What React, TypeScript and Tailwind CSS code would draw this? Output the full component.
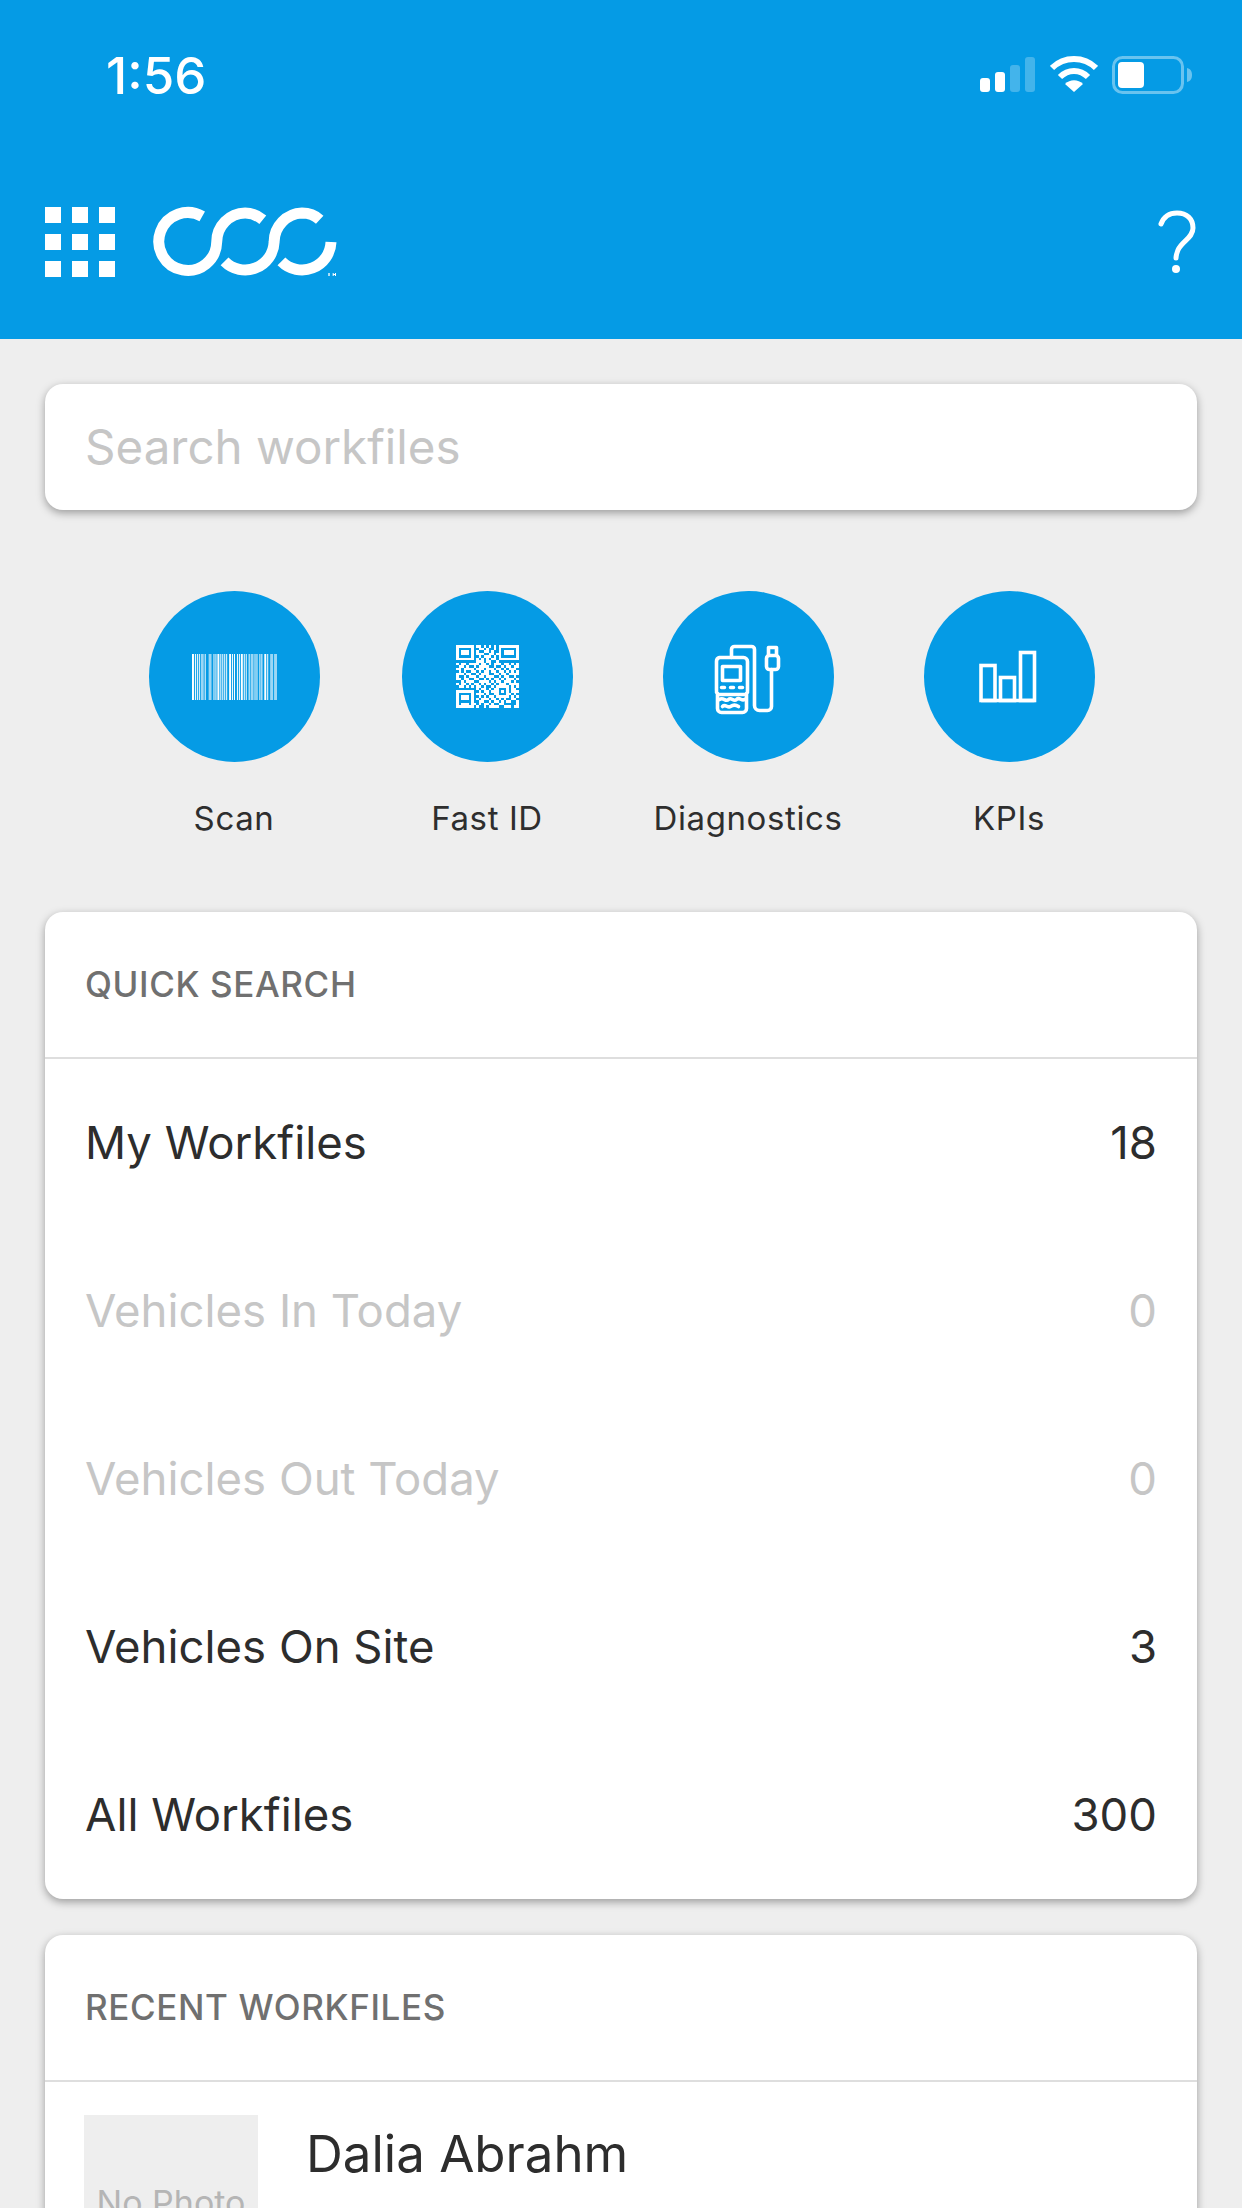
import React from 'react';

const barcode: [number, number][] = [
  [0, 2], [3, 1], [5, 1], [7, 1], [9, 3], [13, 1], [17, 3], [22, 1], [24, 1], [26, 2], [29, 1], [31, 1], [33, 1], [35, 1], [38, 2],
  [41, 1], [43, 1], [46, 1], [48, 1], [50, 2], [53, 1], [55, 1], [58, 1], [60, 3], [64, 1], [66, 1], [69, 1], [71, 1], [74, 2], [77, 1], [80, 3], [84, 3],
];

const qrRows = [
  '1111111011010101011111111',
  '1000001001101001010000001',
  '1011101010011010010111101',
  '1011101011100110110111101',
  '1000001001011101010000001',
  '1111111010101011011111111',
  '0000000011101100100000000',
  '1011011110110101110110101',
  '0110100101111001001011011',
  '1101111011101110110101110',
  '0101001101011011011010101',
  '1110110010111001101101111',
  '1001011101101110010110010',
  '1101100110010101101011101',
  '0010111001111010110111010',
  '1011010110101101011101111',
  '0110101011010010111110101',
  '0000000010110101100010110',
  '1111111001011011101010111',
  '1000001011101001100011010',
  '1011101001010110111110101',
  '1011101010111011010100110',
  '1000001001100101101011001',
  '1011101101011010011000001',
  '1111111010010111100111011',
];

const BarcodeIcon = () => (
  <svg width="85" height="46" viewBox="0 0 87 46" preserveAspectRatio="none">
    {barcode.map(([x, w], i) => (
      <rect key={i} x={x} y="0" width={w} height="46" fill="#fff" fillOpacity={w === 3 ? 0.6 : 1} />
    ))}
  </svg>
);

const QrIcon = () => (
  <svg width="63" height="63" viewBox="0 0 25 25" shapeRendering="crispEdges">
    {qrRows.map((row, y) =>
      row.split('').map((c, x) => (c === '1' ? <rect key={`${x}-${y}`} x={x} y={y} width="1" height="1" fill="#fff" /> : null))
    )}
  </svg>
);

const DiagnosticsIcon = () => (
  <svg width="100" height="100" viewBox="2.5 -1.5 100 100" fill="none" stroke="#fff" strokeWidth="3.6" strokeLinejoin="round" strokeLinecap="round">
    <path d="M36 29V21a3 3 0 0 1 3-3H56a3 3 0 0 1 3 3V77a5 5 0 0 0 5 5H72a4 4 0 0 0 4-4V41" />
    <path d="M24 29H48a4 4 0 0 1 4 4V62a3 3 0 0 1-1 3V80a4 4 0 0 1-4 4H26a4 4 0 0 1-4-4V65a3 3 0 0 1-1-3V33a4 4 0 0 1 3-4Z" />
    <rect x="27" y="38" width="18" height="14" />
    <path d="M24 66H49M24 71c4-3 6 3 9 0s5 3 8 0 5 2 8 0M27 78c3-3 5 2 8 0s5-2 8 0" />
    <path d="M26 59h3M35 59h3M44 59h3" strokeWidth="3.5" />
    <rect x="71" y="27" width="12" height="14" rx="3" />
    <path d="M73 27V19H81V27" />
  </svg>
);

const KpiIcon = () => (
  <svg width="60" height="54" viewBox="0 0 60 54" fill="none" stroke="#fff" strokeWidth="3.6">
    <rect x="2" y="15.5" width="14" height="35" />
    <rect x="21.5" y="27.5" width="14" height="23" />
    <rect x="41.5" y="2.5" width="14" height="48" />
    <path d="M2 50.5H55.5" />
  </svg>
);

const Action = ({ label, children, wide, className = '' }: { label: string; children: React.ReactNode; wide?: boolean; className?: string }) => (
  <div className={`flex flex-col items-center ${wide ? 'w-[185px]' : 'w-[171px]'} ${className}`}>
    <div className="w-[171px] h-[171px] rounded-full bg-[#059be5] flex items-center justify-center">{children}</div>
    <span className="mt-[38px] text-[33px] leading-[36px] tracking-[0.6px] text-[#2e2e2e] font-['Inter',sans-serif] whitespace-nowrap">{label}</span>
  </div>
);

const Row = ({ label, value, off }: { label: string; value: string; off?: boolean }) => (
  <div className={`h-[168px] flex items-center justify-between pl-[40px] pr-[40px] text-[45.5px] font-['Inter',sans-serif] ${off ? 'text-[#c6c6c6]' : 'text-[#2d2d2d]'}`}>
    <span>{label}</span>
    <span>{value}</span>
  </div>
);

const CardHead = ({ title }: { title: string }) => (
  <div className="h-[147px] flex items-center pl-[40px] border-b-2 border-[#dedede] text-[35px] font-medium tracking-[0.6px] text-[#707070] font-['Inter',sans-serif]">
    {title}
  </div>
);

export default function App() {
  return (
    <div className="w-[1242px] h-[2208px] overflow-hidden bg-[#eeeeee]">
      <header className="h-[339px] bg-[#059be5] text-white">
        <div className="flex justify-between items-start pt-[51px] pl-[106px] pr-[50px] h-[200px]">
          <span className="text-[51px] leading-[50px] font-medium font-['Inter',sans-serif]">1:56</span>
          <div className="flex items-start gap-[14px] pt-[5px]">
            <svg width="56" height="36" viewBox="0 0 56 36" fill="#fff">
              <rect x="0" y="22" width="10" height="14" rx="3" />
              <rect x="15" y="16" width="10" height="20" rx="3" />
              <rect x="30" y="9" width="10" height="27" rx="3" fillOpacity="0.25" />
              <rect x="45" y="1" width="10" height="35" rx="3" fillOpacity="0.25" />
            </svg>
            <svg width="48" height="36" viewBox="0 0 48 36" fill="none" stroke="#fff" strokeWidth="6">
              <path d="M2 12C14 0 34 0 46 12" />
              <path d="M10 21C18 13 30 13 38 21" />
              <path d="M24 36L15 28C20 23 28 23 33 28Z" fill="#fff" stroke="none" />
            </svg>
            <svg width="80" height="38" viewBox="0 0 80 38">
              <rect x="1.5" y="1.5" width="69" height="35" rx="9" fill="none" stroke="#fff" strokeOpacity="0.4" strokeWidth="3" />
              <rect x="6" y="6" width="26" height="26" rx="4" fill="#fff" />
              <path d="M75 12C79 13 80 16 80 19S79 25 75 26Z" fill="#fff" fillOpacity="0.4" />
            </svg>
          </div>
        </div>
        <div className="flex items-center justify-between pl-[45px] pr-[46px] h-[69px] mt-[7px]">
          <div className="flex items-center gap-[38px]">
            <div className="grid grid-cols-3 gap-[11px]">
              {Array.from({ length: 9 }).map((_, i) => (
                <div key={i} className="w-[16px] h-[16px] bg-white" />
              ))}
            </div>
            <svg width="184" height="72" viewBox="457 616 553 216" fill="none" stroke="#fff" strokeWidth="33">
              <path d="M605 647A87 87 0 1 0 648.5 724A87 87 0 0 1 734 637C755 637 772 645 787 657" />
              <path d="M672 782A87 87 0 0 0 821 724A87 87 0 0 1 905 637C925 637 945 645 958 657" />
              <path d="M843 782A87 87 0 0 0 992 724" />
              <path d="M984 817h4v9h-4ZM997 817h3v9h-3ZM1004 817h3v9h-3ZM1000 820h4v3h-4Z" fill="#fff" stroke="none" />
            </svg>
          </div>
          <svg width="38" height="64" viewBox="0 0 38 64" fill="none" stroke="#fff" strokeWidth="5" strokeLinecap="round">
            <path d="M3 14C6 6 12 3 19 3C29 3 35 9 35 18C35 28 24 31 20 40C19 43 18 45 18 48" />
            <circle cx="18" cy="59" r="4" fill="#fff" stroke="none" />
          </svg>
        </div>
      </header>

      <div className="px-[45px] pt-[45px]">
        <div className="h-[126px] rounded-[18px] bg-white shadow-[0_3px_8px_rgba(0,0,0,0.35)] flex items-center pl-[40px] text-[47.5px] text-[#c6c6c6] font-['Inter',sans-serif]">
          Search workfiles
        </div>

        <div className="mt-[81px] flex justify-center gap-[83px]">
          <Action label="Scan" className="ml-[1px] mr-[-1px]"><BarcodeIcon /></Action>
          <Action label="Fast ID"><QrIcon /></Action>
          <Action label="Diagnostics" wide><DiagnosticsIcon /></Action>
          <Action label="KPIs"><KpiIcon /></Action>
        </div>

        <section className="mt-[76px] rounded-[18px] bg-white shadow-[0_3px_8px_rgba(0,0,0,0.35)] overflow-hidden">
          <CardHead title="QUICK SEARCH" />
          <Row label="My Workfiles" value="18" />
          <Row label="Vehicles In Today" value="0" off />
          <Row label="Vehicles Out Today" value="0" off />
          <Row label="Vehicles On Site" value="3" />
          <Row label="All Workfiles" value="300" />
        </section>

        <section className="mt-[36px] rounded-t-[18px] bg-white shadow-[0_3px_8px_rgba(0,0,0,0.35)] overflow-hidden">
          <CardHead title="RECENT WORKFILES" />
          <div className="flex pt-[33px] pl-[39px] gap-[48px] h-[200px]">
            <div className="w-[174px] h-[174px] bg-[#eeeeee] flex items-center justify-center shrink-0 text-[34px] text-[#b5b5b5] font-['Inter',sans-serif]">
              No Photo
            </div>
            <div className="text-[51px] leading-[60px] mt-[9px] text-[#2d2d2d] font-['Inter',sans-serif]">Dalia Abrahm</div>
          </div>
        </section>
      </div>
    </div>
  );
}
